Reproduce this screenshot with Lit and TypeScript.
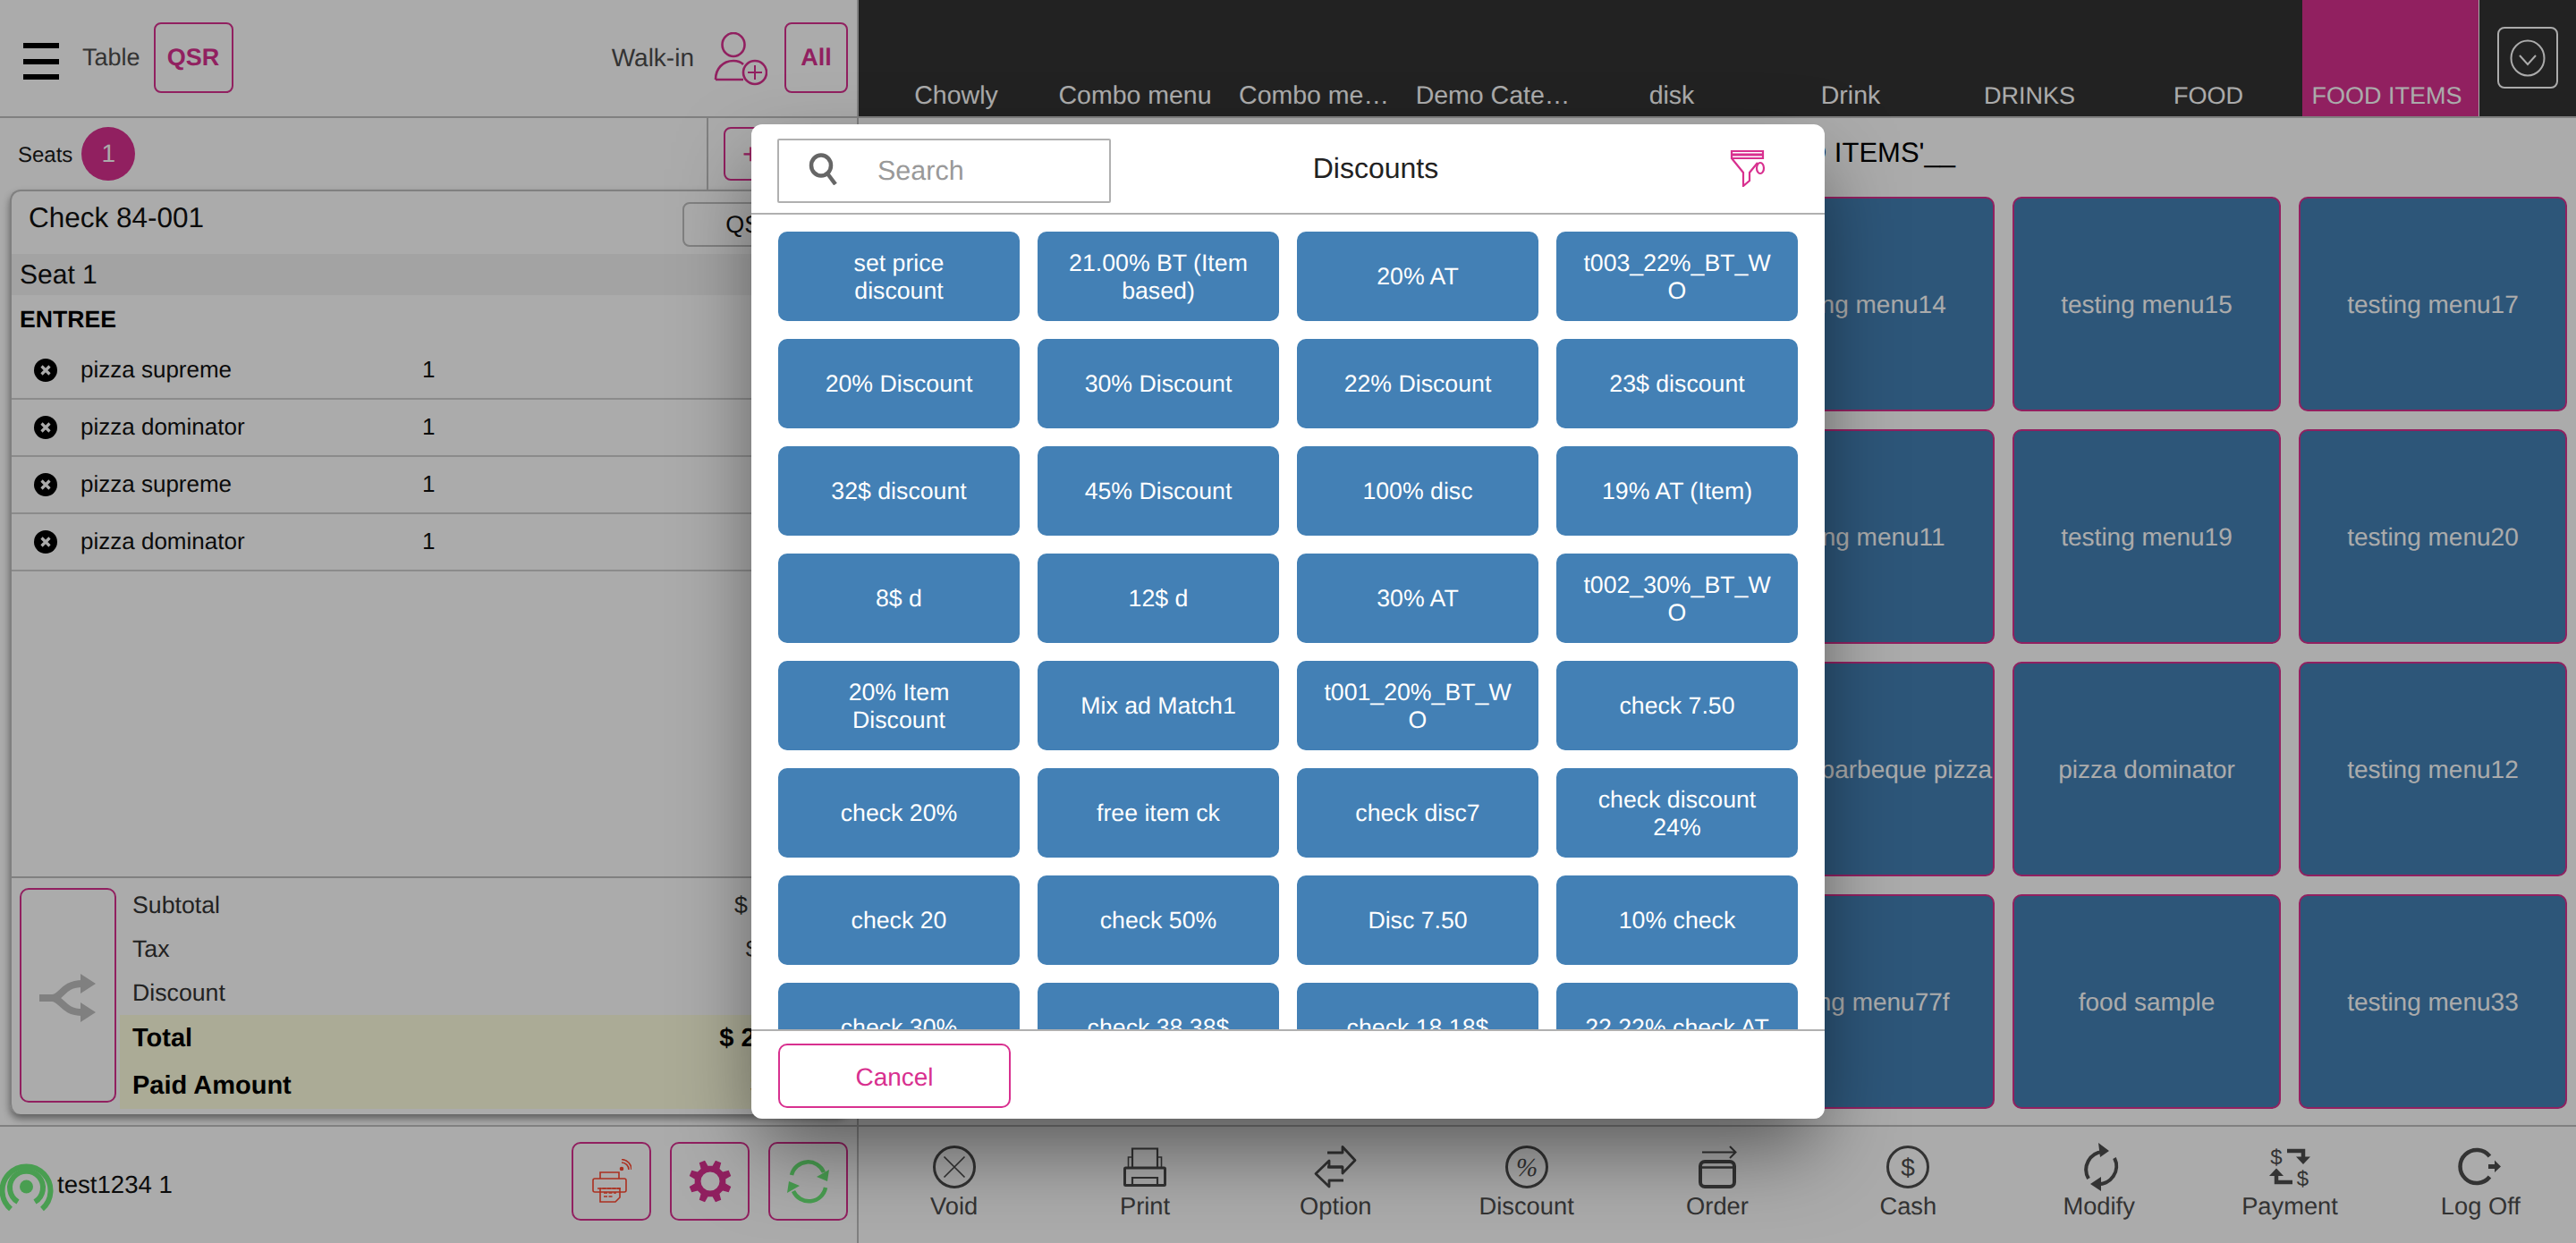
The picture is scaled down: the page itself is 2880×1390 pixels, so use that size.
import { LitElement, html, css, svg } from "lit";
import { customElement } from "lit/decorators.js";

const TABS = ["Chowly", "Combo menu", "Combo me…", "Demo Cate…", "disk", "Drink", "DRINKS", "FOOD", "FOOD ITEMS"];
const CARDS = [
  "testing menu14", "testing menu15", "testing menu17",
  "testing menu11", "testing menu19", "testing menu20",
  "chicken barbeque pizza", "pizza dominator", "testing menu12",
  "testing menu77f", "food sample", "testing menu33",
];
const DISCOUNTS = [
  "set price\ndiscount", "21.00% BT (Item\nbased)", "20% AT", "t003_22%_BT_W\nO",
  "20% Discount", "30% Discount", "22% Discount", "23$ discount",
  "32$ discount", "45% Discount", "100% disc", "19% AT (Item)",
  "8$ d", "12$ d", "30% AT", "t002_30%_BT_W\nO",
  "20% Item\nDiscount", "Mix ad Match1", "t001_20%_BT_W\nO", "check 7.50",
  "check 20%", "free item ck", "check disc7", "check discount\n24%",
  "check 20", "check 50%", "Disc 7.50", "10% check",
  "check 30%", "check 38.38$", "check 18.18$", "22.22% check AT",
];
const ITEMS = ["pizza supreme", "pizza dominator", "pizza supreme", "pizza dominator"];

const gearPath = () => {
  const pts: string[] = [];
  const n = 8;
  for (let i = 0; i < n; i++) {
    const a = (i / n) * Math.PI * 2 - Math.PI / 2 + Math.PI / 8;
    const w = Math.PI / n;
    const polar = (r: number, t: number) => `${(24 + r * Math.cos(t)).toFixed(2)} ${(24 + r * Math.sin(t)).toFixed(2)}`;
    pts.push(polar(17.5, a - w * 0.62), polar(24, a - w * 0.36), polar(24, a + w * 0.36), polar(17.5, a + w * 0.62));
  }
  return `M${pts.join("L")}Z`;
};

const ICONS: Record<string, unknown> = {
  Void: svg`<circle cx="24" cy="24" r="22.5" fill="none" stroke-width="3"/><path d="M12.5 12.5 35.500 35.500M35.500 12.500 12.500 35.500" fill="none" stroke-width="1.700"/>`,
  Print: svg`<g fill="none"><path d="M10 25V3.500H38V25" stroke-width="2.200"/><path d="M10 13H5.500V25M38 13H42.500V25" stroke-width="1.600"/><rect x="1.500" y="25" width="45" height="19.500" rx="1" stroke-width="3"/><path d="M10 43V36H38V43" stroke-width="2.200"/></g>`,
  Option: svg`<g fill="none" stroke-width="2.800" stroke-linejoin="round"><path d="M15 8H32V1.500L46 16.500 32 31V24H15"/><path d="M33 39H17V46L2 31.500 17 17V24H32"/></g>`,
  Discount: svg`<circle cx="24" cy="24" r="22.500" fill="none" stroke-width="3"/><text x="24" y="34" text-anchor="middle" class="glyph-pct">%</text>`,
  Order: svg`<g fill="none"><path d="M7 7.500H44M38 1 44.500 7.500 38 14" stroke-width="2"/><rect x="5" y="18" width="38" height="28" rx="5" stroke-width="4"/><path d="M5 24.500H43" stroke-width="2.500"/></g>`,
  Cash: svg`<circle cx="24" cy="24" r="22.500" fill="none" stroke-width="3"/><text x="24" y="34" text-anchor="middle" class="glyph-usd">$</text>`,
  Modify: svg`<g fill="none" stroke-width="4"><path d="M12 37A20 20 0 0 1 28 7"/><path d="M41 14A20 20 0 0 1 21 43"/></g><path d="M35 6 23-3 25 13ZM14 43 26 35 26 51Z" stroke="none"/>`,
  Payment: svg`<g fill="none" stroke-width="4.500"><path d="M21 6H39V16"/><path d="M27 41H9V33"/></g><path d="M31 12.500H47L39 21ZM1 34H17L9 25.500Z" stroke="none"/><text x="9" y="20.500" text-anchor="middle" class="glyph-pay" stroke="none">$</text><text x="38.500" y="44.500" text-anchor="middle" class="glyph-pay" stroke="none">$</text>`,
  "Log Off": svg`<path d="M34.500 12A18.500 18.500 0 1 0 34.500 35" fill="none" stroke-width="4.500"/><path d="M33 21H40V16.500L47 23.500 40 30V26H33Z" stroke="none"/>`,
};
const TOOLS = ["Void", "Print", "Option", "Discount", "Order", "Cash", "Modify", "Payment", "Log Off"];

@customElement("app-root")
export class AppRoot extends LitElement {
  static styles = css`
    :host {
      display: block;
      width: 2880px;
      height: 1390px;
      position: relative;
      overflow: hidden;
      background: #fff;
      font-family: "Liberation Sans", Arial, sans-serif;
      color: #000;
      text-rendering: geometricPrecision;
    }
    * { box-sizing: border-box; }
    .app { display: flex; height: 1390px; }

    /* left column */
    .left { width: 960px; flex: none; border-right: 2px solid #bfbfbf; display: flex; flex-direction: column; height: 100%; }
    .lhead { height: 132px; flex: none; border-bottom: 2px solid #bfbfbf; display: flex; align-items: flex-start; padding: 25px 10px 0 26px; }
    .burger { width: 40px; margin-top: 23px; display: flex; flex-direction: column; gap: 11.500px; }
    .burger i { display: block; height: 6px; background: #000; }
    .lhead .t { font-size: 27px; line-height: 79px; color: #4d4d4d; }
    .table { margin-left: 26px; }
    .mag-btn { border: 2px solid #d8308f; border-radius: 8px; color: #d8308f; font-weight: 700; font-size: 27px; display: flex; align-items: center; justify-content: center; height: 79px; background: transparent; }
    .qsr { width: 89px; margin-left: 15px; }
    .walk { margin-left: auto; font-size: 28px !important; }
    .person { width: 60px; height: 60px; margin: 11px 19px 0 22px; }
    .all { width: 71px; }

    .seats { height: 80px; flex: none; display: flex; align-items: center; padding-left: 20px; font-size: 24px; color: #1a1a1a; position: relative; }
    .seats > span { padding-top: 3px; }
    .circle { width: 60px; height: 60px; margin-left: 10px; border-radius: 50%; background: #d8308f; color: #fff; font-size: 28px; display: flex; align-items: center; justify-content: center; }
    .seatdiv { margin-left: 639px; width: 2px; height: 80px; background: #bfbfbf; }
    .plus { margin-left: 17px; width: 60px; height: 60px; border: 2px solid #d8308f; border-radius: 8px; color: #d8308f; font-size: 32px; display: flex; align-items: center; justify-content: center; }

    .check { margin-left: 11px; width: 937px; height: 1034px; flex: none; border: 2px solid #bfbfbf; border-bottom: 0; border-right: 0; border-radius: 12px; box-shadow: 0 5px 8px rgba(0,0,0,.45); display: flex; flex-direction: column; overflow: hidden; }
    .chead { height: 70px; flex: none; display: flex; align-items: flex-start; padding: 8px 0 0 19px; }
    .chead .title { font-size: 31.500px; line-height: 42px; color: #111; }
    .chead .q { margin-left: auto; margin-right: 30px; width: 155px; height: 50px; border: 2px solid #bfbfbf; border-radius: 8px; font-size: 27px; display: flex; align-items: center; justify-content: center; color: #111; margin-top: 4px; }
    .seat1 { height: 46px; flex: none; background: #f3f3f3; padding-left: 9px; font-size: 30px; line-height: 47px; color: #111; }
    .entree { height: 53px; flex: none; padding-left: 9px; font-size: 26.600px; font-weight: 700; line-height: 54px; }
    .item { height: 64px; flex: none; border-bottom: 2px solid #d0d0d0; display: flex; align-items: center; font-size: 26px; color: #111; padding-left: 25px; }
    .item span { margin-top: -2px; }
    .xc { width: 26px; height: 26px; flex: none; }
    .item .n { margin-left: 26px; width: 382px; }
    .sum { margin-top: auto; border-top: 2px solid #bfbfbf; height: 266px; flex: none; display: flex; padding: 11px 0 0 9px; }
    .swap { width: 108px; height: 240px; flex: none; border: 2px solid #d8308f; border-radius: 10px; display: flex; align-items: center; justify-content: center; }
    .swap svg { width: 64px; height: 54px; margin-top: 6px; }
    .sumr { flex: 1; margin-left: 4px; margin-top: -5px; display: flex; flex-direction: column; }
    .row { display: flex; justify-content: space-between; padding: 0 38px 0 14px; height: 49px; line-height: 49px; font-size: 26.700px; color: #333; }
    .row.tax { padding-right: 40px; }
    .row.disc { padding-right: 26px; }
    .row.b { height: 52.500px; line-height: 52.500px; font-size: 29px; font-weight: 700; color: #000; background: #ffffe0; padding-right: 47px; }
    .row.b.paid { padding-right: 28px; }

    .lfoot { flex: 1; margin-top: 12px; border-top: 2px solid #bfbfbf; display: flex; align-items: flex-start; padding: 17px 10px 0 0; }
    .wifi { width: 60px; height: 58px; margin-top: 20px; flex: none; }
    .who { font-size: 27.600px; margin-left: 4px; line-height: 96px; color: #111; }
    .sq { width: 89px; height: 88px; margin-left: 21px; border: 2px solid #d8308f; border-radius: 10px; display: flex; align-items: center; justify-content: center; }
    .who + .sq { margin-left: auto; }

    /* right column */
    .right { flex: 1; display: flex; flex-direction: column; min-width: 0; }
    .tabs { height: 132px; flex: none; background: #333; border-bottom: 2px solid #bfbfbf; display: flex; padding-left: 14px; }
    .tab { width: 198px; margin-right: 2px; color: #fff; font-size: 27px; text-align: center; padding: 91px 8px 0 0; line-height: 32px; white-space: nowrap; }
    .tab.mixed { font-size: 28.500px; }
    .tab.on { background: #d8308f; width: 197px; margin-right: 0; border: 0; box-shadow: 1px 0 0 #fff; }
    .chev { margin: 30px 0 0 21px; width: 68px; height: 69px; border: 2px solid #fff; border-radius: 8px; display: flex; align-items: center; justify-content: center; }
    .chev svg { width: 40px; height: 42px; }
    .main { flex: 1; min-height: 0; }
    .mtitle { height: 88px; padding: 19px 694px 0 0; text-align: right; font-size: 31px; line-height: 40px; white-space: nowrap; }
    .grid { display: grid; grid-template-columns: repeat(3, 300px); grid-auto-rows: 240px; gap: 20px; justify-content: end; padding-right: 10px; }
    .card { background: #4380b5; border: 2px solid #d8308f; border-radius: 10px; color: #fff; font-size: 28px; display: flex; align-items: center; justify-content: center; white-space: nowrap; padding-top: 1px; }

    .tools { height: 132px; flex: none; border-top: 2px solid #bfbfbf; display: grid; grid-template-columns: repeat(9, 1fr); }
    .tool { display: flex; flex-direction: column; align-items: center; padding-top: 21px; color: #4d4d4d; font-size: 27.300px; }
    .tool svg { width: 48px; height: 48px; overflow: visible; fill: #4d4d4d; stroke: #4d4d4d; }
    .tool span { line-height: 32px; margin-top: 4px; }
    .glyph-pct { font-family: "Liberation Serif", serif; font-style: italic; font-size: 29px; stroke: none; }
    .glyph-usd { font-family: "Liberation Sans", sans-serif; font-size: 28px; stroke: none; }
    .glyph-pay { font-family: "Liberation Sans", sans-serif; font-size: 24px; }

    /* modal */
    .backdrop { position: absolute; inset: 0; background: rgba(0,0,0,.33); }
    .modal { position: absolute; left: 840px; top: 139px; width: 1200px; height: 1112px; background: #fff; border-radius: 12px; box-shadow: 0 40px 90px -10px rgba(0,0,0,.5); display: flex; flex-direction: column; overflow: hidden; }
    .mhead { height: 101px; flex: none; border-bottom: 2px solid #b0b0b0; display: flex; align-items: flex-start; padding: 16px 0 0 29px; }
    .search { width: 373px; height: 72px; border: 2px solid #b0b0b0; border-radius: 2px; display: flex; align-items: center; padding-left: 33px; font-size: 30.500px; color: #999; }
    .search svg { width: 36px; height: 36px; margin: -4px 41px 0 0; flex: none; }
    .mt { flex: 1; text-align: center; font-size: 32px; line-height: 66px; color: #222; padding-right: 100px; }
    .funnel { width: 40px; height: 42px; margin: 12px 66px 0 0; flex: none; }
    .mbody { flex: 1; min-height: 0; overflow: hidden; padding: 19px 30px 0; }
    .dgrid { display: grid; grid-template-columns: repeat(4, 270px); grid-auto-rows: 100px; gap: 20px; }
    .d { background: #4380b5; color: #fff; border-radius: 10px; font-size: 26.700px; line-height: 31.500px; display: flex; align-items: center; justify-content: center; text-align: center; white-space: pre-line; padding-top: 2px; }
    .mfoot { height: 100px; flex: none; border-top: 2px solid #b0b0b0; padding: 14px 30px 0; }
    .cancel { width: 260px; height: 72px; border: 2px solid #d8308f; border-radius: 10px; color: #d8308f; font-size: 28px; display: flex; align-items: center; justify-content: center; padding-top: 3px; }
  `;

  private xIcon() {
    return html`<svg class="xc" viewBox="0 0 26 26"><circle cx="13" cy="13" r="13" fill="#000"/><path d="M8.500 8.500 17.500 17.500M17.500 8.500 8.500 17.500" stroke="#fff" stroke-width="3.200" fill="none"/></svg>`;
  }

  render() {
    return html`
      <div class="app">
        <section class="left">
          <header class="lhead">
            <div class="burger"><i></i><i></i><i></i></div>
            <span class="t table">Table</span>
            <div class="mag-btn qsr">QSR</div>
            <span class="t walk">Walk-in</span>
            <svg class="person" viewBox="0 0 60 60" fill="none" stroke="#d8308f" stroke-width="2.600">
              <ellipse cx="22" cy="14" rx="12.500" ry="13"/>
              <path d="M2 53C2 41 10 32 22 32 26 32 30 33 33 36M2 53H33"/>
              <circle cx="46" cy="45" r="13"/>
              <path d="M46 37V53M38 45H54" stroke-width="2"/>
            </svg>
            <div class="mag-btn all">All</div>
          </header>
          <div class="seats">
            <span>Seats</span>
            <div class="circle">1</div>
            <div class="seatdiv"></div>
            <div class="plus">+</div>
          </div>
          <div class="check">
            <div class="chead"><span class="title">Check 84-001</span><div class="q">QSR</div></div>
            <div class="seat1">Seat 1</div>
            <div class="entree">ENTREE</div>
            ${ITEMS.map((n) => html`<div class="item">${this.xIcon()}<span class="n">${n}</span><span>1</span></div>`)}
            <div class="sum">
              <div class="swap">
                <svg viewBox="0 0 64 54">
                  <g fill="none" stroke="#bfbfbf" stroke-width="8"><path d="M0 27H18"/><path d="M14 27C25 27 26 11 48 11"/><path d="M14 27C25 27 26 43 48 43"/></g>
                  <path fill="#bfbfbf" d="M46 0 63 11 46 22ZM46 32 63 43 46 54Z"/>
                </svg>
              </div>
              <div class="sumr">
                <div class="row"><span>Subtotal</span><span>$ 20.00</span></div>
                <div class="row tax"><span>Tax</span><span>$ 0.00</span></div>
                <div class="row disc"><span>Discount</span><span>$ 0.00</span></div>
                <div class="row b"><span>Total</span><span>$ 20.00</span></div>
                <div class="row b paid"><span>Paid Amount</span><span>$ 0.00</span></div>
              </div>
            </div>
          </div>
          <footer class="lfoot">
            <svg class="wifi" viewBox="0 0 60 58" fill="none" stroke="#6eec7a" stroke-width="6">
              <circle cx="29.500" cy="30" r="7.500" fill="#6eec7a" stroke="none"/>
              <path d="M20 47A18.500 18.500 0 1 1 39 47"/>
              <path d="M12 55A27 27 0 1 1 47 55"/>
            </svg>
            <span class="who">test1234 1</span>
            <div class="sq">
              <svg width="44" height="50" viewBox="0 0 44 50" fill="none" stroke="#ff4830" stroke-width="1.600">
                <path d="M9 22V15H30V22"/>
                <rect x="1" y="22" width="37" height="15" rx="2"/>
                <path d="M9 33V48H26L31 43V33H9Z"/>
                <path d="M6 33H33M13 38H27M13 42H24"  stroke-dasharray="4 1.500"/>
                <circle cx="33" cy="11" r="1.500" fill="#ff4830"/>
                <path d="M33 4A8 8 0 0 1 41 12M33 0.500A11.500 11.500 0 0 1 44 12"/>
              </svg>
            </div>
            <div class="sq">
              <svg width="48" height="48" viewBox="0 0 48 48"><path fill="#d8308f" fill-rule="evenodd" d="${gearPath()}M24 13.500A10.500 10.500 0 1 0 24 34.500 10.500 10.500 0 1 0 24 13.500Z"/></svg>
            </div>
            <div class="sq">
              <svg width="48" height="42" viewBox="0 0 48 42" overflow="visible">
                <g fill="none" stroke="#6eec7a" stroke-width="4.500"><path d="M5 14A19 19 0 0 1 41 11"/><path d="M43 28A19 19 0 0 1 7 32"/></g>
                <path fill="#6eec7a" d="M47 8 45 21 33 16ZM0 34 2 21 14 26Z"/>
              </svg>
            </div>
          </footer>
        </section>

        <section class="right">
          <nav class="tabs">
            ${TABS.map((t) => html`<div class="tab ${t === "FOOD ITEMS" ? "on" : ""} ${t !== t.toUpperCase() ? "mixed" : ""}">${t}</div>`)}
            <div class="chev">
              <svg viewBox="0 0 40 42" fill="none" stroke="#fff" stroke-width="2"><ellipse cx="20" cy="21" rx="18.500" ry="19.500"/><path d="M11 18 20 28 29 18"/></svg>
            </div>
          </nav>
          <div class="main">
            <div class="mtitle">__'FOOD ITEMS'__</div>
            <div class="grid">${CARDS.map((c) => html`<div class="card">${c}</div>`)}</div>
          </div>
          <footer class="tools">
            ${TOOLS.map((t) => html`<div class="tool"><svg viewBox="0 0 48 48">${ICONS[t]}</svg><span>${t}</span></div>`)}
          </footer>
        </section>
      </div>

      <div class="backdrop"></div>
      <div class="modal">
        <div class="mhead">
          <div class="search">
            <svg viewBox="0 0 36 36" fill="none" stroke="#666" stroke-width="4.500"><ellipse cx="14" cy="14" rx="11" ry="11.500"/><path d="M21 23 30 35"/></svg>
            <span>Search</span>
          </div>
          <div class="mt">Discounts</div>
          <svg class="funnel" viewBox="0 0 40 42" fill="none" stroke="#d8308f" stroke-width="2.200">
            <path d="M2 2H37V10H2ZM2 10 15 26V41L22 35V26L31 15"/>
            <path d="M2 6H37" stroke-width="3"/>
            <ellipse cx="34" cy="21" rx="4" ry="6"/>
          </svg>
        </div>
        <div class="mbody"><div class="dgrid">${DISCOUNTS.map((d) => html`<div class="d">${d}</div>`)}</div></div>
        <div class="mfoot"><div class="cancel">Cancel</div></div>
      </div>
    `;
  }
}
